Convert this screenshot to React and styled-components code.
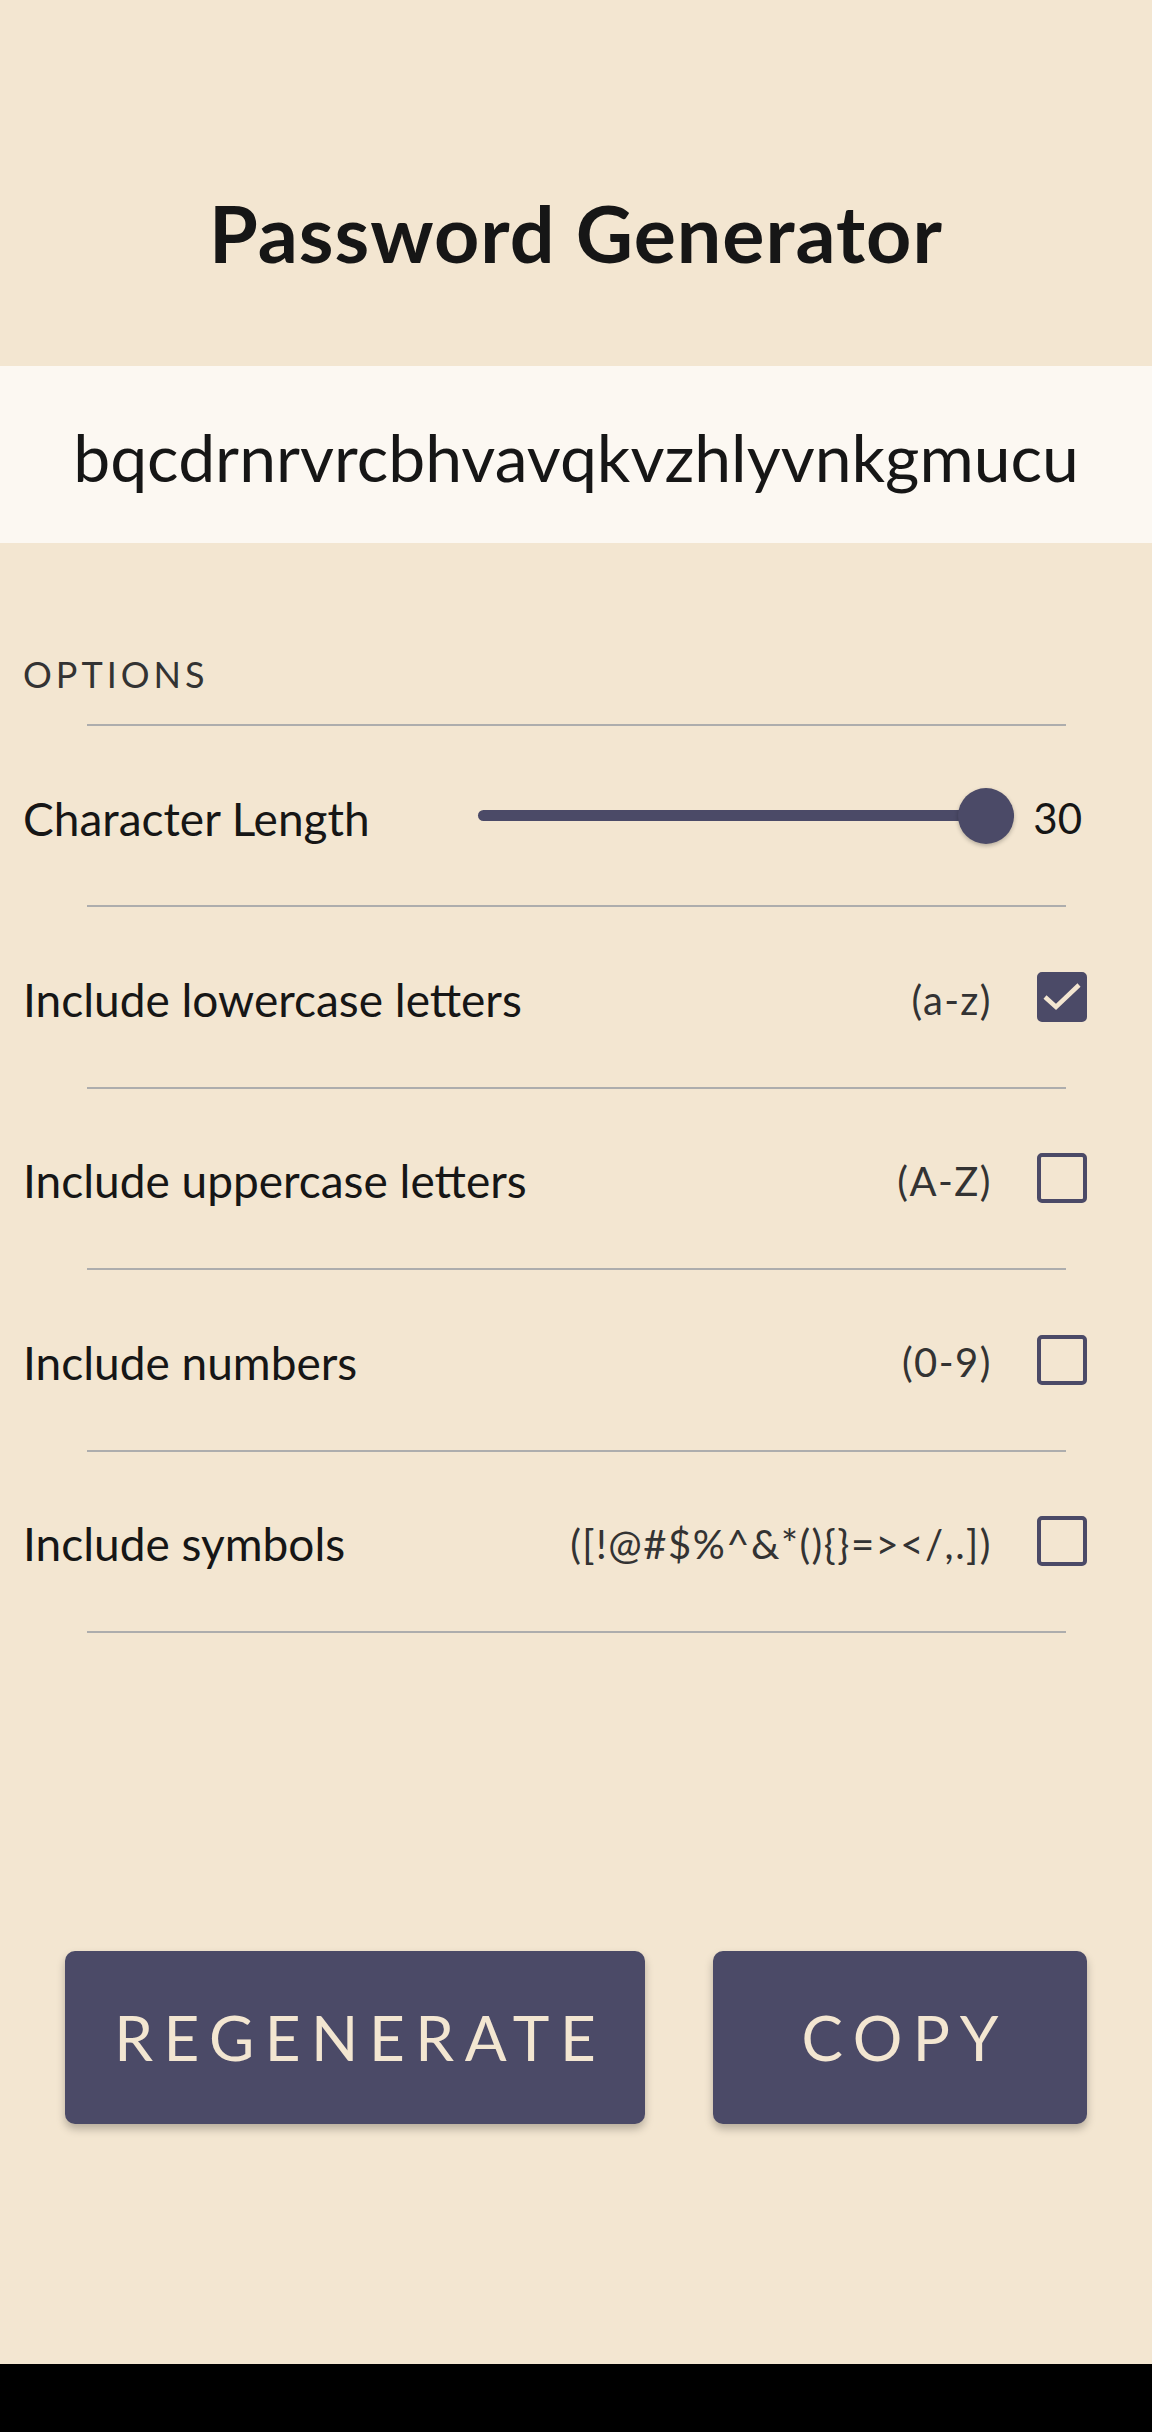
import React, { useState } from "react";
import styled, { createGlobalStyle } from "styled-components";

const Global = createGlobalStyle`
  html, body { margin: 0; padding: 0; background: #000; }
  body { font-family: "Lato", "Noto Sans", sans-serif; }
  * { box-sizing: border-box; }
`;

const Page = styled.div`
  height: 2364px;
  background: #f3e6d1;
  display: flex;
  flex-direction: column;
  color: #161616;
`;

const Header = styled.header`
  height: 366px;
  display: flex;
  align-items: flex-start;
  justify-content: center;
  padding-top: 186px;
`;

const Title = styled.h1`
  margin: 0;
  font-size: 79px;
  line-height: 1.2;
  font-weight: 700;
  letter-spacing: 1px;
`;

const PasswordBand = styled.div`
  height: 177px;
  background: #fcf8f2;
  display: flex;
  align-items: flex-start;
  justify-content: center;
  padding-top: 51px;
  font-size: 66px;
  line-height: 1.2;
  font-weight: 400;
`;

const Options = styled.section`
  display: flex;
  flex-direction: column;
  padding-top: 113px;
`;

const SectionLabel = styled.div`
  padding-left: 23px;
  font-size: 36px;
  letter-spacing: 4px;
  color: #333;
  line-height: 1;
  padding-bottom: 32px;
`;

const Divider = styled.hr`
  width: 979px;
  margin: 0 auto;
  border: none;
  height: 2px;
  flex-shrink: 0;
  background: #adadad;
`;

const Row = styled.div`
  height: 179.4px;
  display: flex;
  align-items: center;
  padding: 0 65px 0 23px;
  gap: 45px;
`;

const Label = styled.span`
  font-size: 46px;
  flex: 1;
  padding-top: 5px;
`;

const Hint = styled.span`
  font-size: 40px;
  color: #333;
  letter-spacing: 1.5px;
  padding-top: 5px;
`;

const SliderWrap = styled.div`
  display: flex;
  align-items: center;
  gap: 19px;
  margin-right: 5px;
`;

const Track = styled.div`
  position: relative;
  width: 536px;
  height: 11px;
  border-radius: 6px;
  background: #4b4a67;
`;

const Thumb = styled.div`
  position: absolute;
  right: 0;
  top: 50%;
  width: 56px;
  height: 56px;
  margin-top: -28px;
  border-radius: 50%;
  background: #4b4a67;
  box-shadow: 0 2px 4px rgba(0, 0, 0, 0.25);
`;

const Value = styled.span`
  font-size: 42px;
  padding-top: 5px;
`;

const Box = styled.div`
  width: 50px;
  height: 50px;
  border: 4px solid #4b4a67;
  border-radius: 5px;
  background: ${(p) => (p.$checked ? "#4b4a67" : "transparent")};
  display: flex;
  align-items: center;
  justify-content: center;
  flex-shrink: 0;
`;

const Buttons = styled.div`
  display: flex;
  padding: 318px 65px 0 65px;
  gap: 68px;
`;

const Button = styled.button`
  width: ${(p) => p.$w}px;
  height: 173px;
  border: none;
  border-radius: 10px;
  background: #4b4a67;
  color: #f3e6d1;
  font-family: "Lato", sans-serif;
  font-size: 62px;
  letter-spacing: 0.17em;
  padding: 0 0 0 0.17em;
  box-shadow: 0 5px 8px rgba(0, 0, 0, 0.25);
`;

const Check = () => (
  <svg width="42" height="42" viewBox="0 0 42 42" fill="none">
    <path d="M4 21 L15 31 L38 9" stroke="#f3e6d1" strokeWidth="4.5" strokeLinecap="butt" strokeLinejoin="miter" />
  </svg>
);

const options = [
  { label: "Include lowercase letters", hint: "(a-z)", checked: true },
  { label: "Include uppercase letters", hint: "(A-Z)", checked: false },
  { label: "Include numbers", hint: "(0-9)", checked: false },
  { label: "Include symbols", hint: "([!@#$%^&*(){}=></,.])", checked: false },
];

export default function App() {
  const [opts] = useState(options);
  return (
    <>
      <Global />
      <Page>
        <Header>
          <Title>Password Generator</Title>
        </Header>
        <PasswordBand>bqcdrnrvrcbhvavqkvzhlyvnkgmucu</PasswordBand>
        <Options>
          <SectionLabel>OPTIONS</SectionLabel>
          <Divider />
          <Row>
            <Label>Character Length</Label>
            <SliderWrap>
              <Track>
                <Thumb />
              </Track>
              <Value>30</Value>
            </SliderWrap>
          </Row>
          <Divider />
          {opts.map((o) => (
            <React.Fragment key={o.label}>
              <Row>
                <Label>{o.label}</Label>
                <Hint>{o.hint}</Hint>
                <Box $checked={o.checked}>{o.checked && <Check />}</Box>
              </Row>
              <Divider />
            </React.Fragment>
          ))}
        </Options>
        <Buttons>
          <Button $w={580}>REGENERATE</Button>
          <Button $w={374}>COPY</Button>
        </Buttons>
      </Page>
    </>
  );
}
